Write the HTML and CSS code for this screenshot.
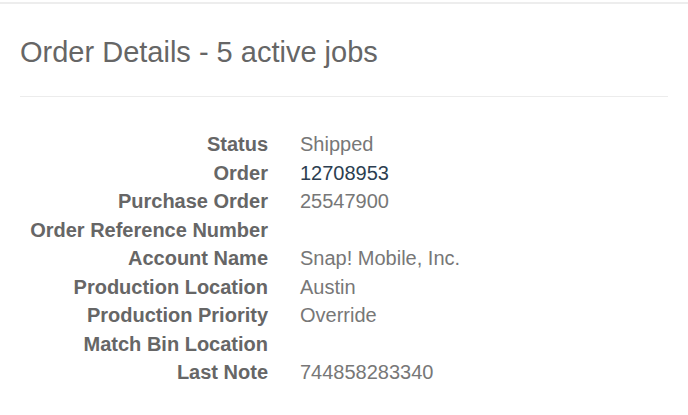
FILE: index.html
```html
<!DOCTYPE html>
<html lang="en">

<head>
    <meta charset="UTF-8">
    <meta name="viewport" content="width=device-width, initial-scale=1.0">
    <title>Order Details</title>
    <link rel="stylesheet" href="styles.css">
</head>

<body>
    <div class="panel">
        <h1 class="panel-title">Order Details - 5 active jobs</h1>

        <dl class="details">
            <dt>Status</dt>
            <dd>Shipped</dd>

            <dt>Order</dt>
            <dd><a href="#">12708953</a></dd>

            <dt>Purchase Order</dt>
            <dd>25547900</dd>

            <dt>Order Reference Number</dt>
            <dd></dd>

            <dt>Account Name</dt>
            <dd>Snap! Mobile, Inc.</dd>

            <dt>Production Location</dt>
            <dd>Austin</dd>

            <dt>Production Priority</dt>
            <dd>Override</dd>

            <dt>Match Bin Location</dt>
            <dd></dd>

            <dt>Last Note</dt>
            <dd>744858283340</dd>
        </dl>
    </div>
</body>

</html>
```

FILE: styles.css
```css
body {
    font-family: "Liberation Sans", Arial, sans-serif;
    background-color: #fff;
    margin: 0;
    padding: 0;
}

.panel {
    border-top: 2px solid #ededed;
    margin-top: 2px;
    padding: 0 20px;
}

.panel-title {
    font-size: 29px;
    font-weight: normal;
    color: #666;
    margin: 0;
    padding: 31px 0 27px;
    line-height: 34px;
    border-bottom: 1px solid #ececec;
}

.details {
    display: grid;
    grid-template-columns: 248px 1fr;
    column-gap: 32px;
    margin: 33px 0 0;
    font-size: 20px;
    line-height: 28.5px;
}

.details dt {
    font-weight: bold;
    color: #666;
    text-align: right;
}

.details dd {
    margin: 0;
    color: #777;
}

.details dd a {
    color: #2c3e50;
    text-decoration: none;
}
```
